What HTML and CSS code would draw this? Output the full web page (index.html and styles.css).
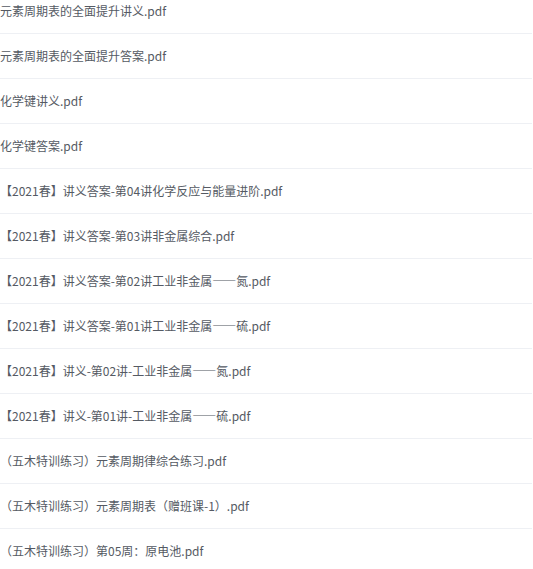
FILE: index.html
```html
<!DOCTYPE html>
<html lang="zh-CN">
<head>
<meta charset="utf-8">
<title>文件列表</title>
<link rel="stylesheet" href="styles.css">
</head>
<body>
<ul class="file-list">
  <li class="file-item">元素周期表的全面提升讲义.pdf</li>
  <li class="file-item">元素周期表的全面提升答案.pdf</li>
  <li class="file-item">化学键讲义.pdf</li>
  <li class="file-item">化学键答案.pdf</li>
  <li class="file-item">【2021春】讲义答案-第04讲化学反应与能量进阶.pdf</li>
  <li class="file-item">【2021春】讲义答案-第03讲非金属综合.pdf</li>
  <li class="file-item">【2021春】讲义答案-第02讲工业非金属——氮.pdf</li>
  <li class="file-item">【2021春】讲义答案-第01讲工业非金属——硫.pdf</li>
  <li class="file-item">【2021春】讲义-第02讲-工业非金属——氮.pdf</li>
  <li class="file-item">【2021春】讲义-第01讲-工业非金属——硫.pdf</li>
  <li class="file-item">（五木特训练习）元素周期律综合练习.pdf</li>
  <li class="file-item">（五木特训练习）元素周期表（赠班课-1）.pdf</li>
  <li class="file-item">（五木特训练习）第05周：原电池.pdf</li>
</ul>
</body>
</html>
```

FILE: styles.css
```css
html, body {
  margin: 0;
  padding: 0;
  background: #ffffff;
}
body {
  font-family: "Noto Sans CJK SC", "Noto Sans", sans-serif;
  font-size: 12px;
  color: #555a63;
  overflow: hidden;
}
.file-list {
  list-style: none;
  margin: -11px 0 0 0;
  padding: 0;
  width: 532px;
}
.file-item {
  height: 44px;
  line-height: 44px;
  border-bottom: 1px solid #eef0f4;
  white-space: nowrap;
}
```
